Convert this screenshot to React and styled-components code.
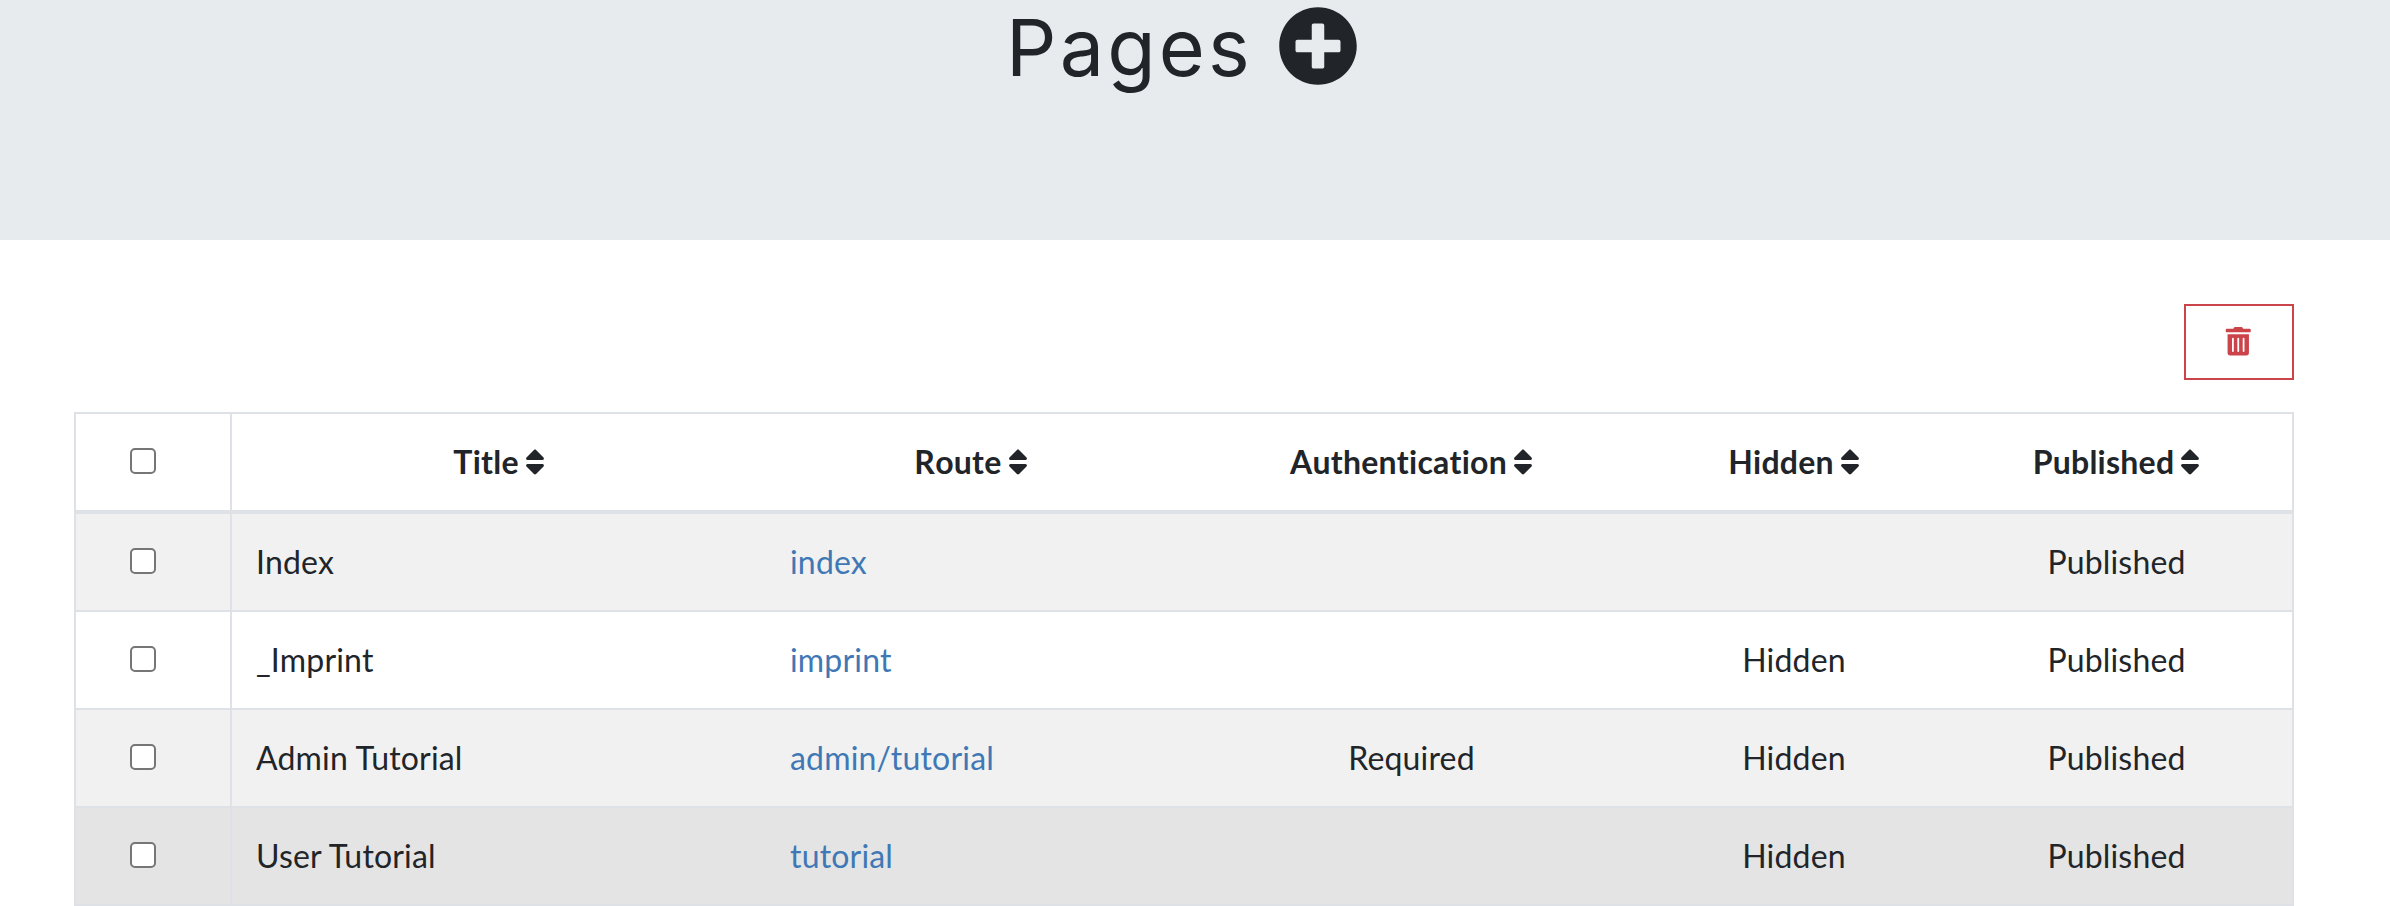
import React from "react";
import styled, { createGlobalStyle } from "styled-components";
import { FaPlusCircle, FaSort, FaTrashAlt } from "react-icons/fa";

const GlobalStyle = createGlobalStyle`
  * { box-sizing: border-box; }
  body {
    margin: 0;
    background: #fff;
    color: #212529;
    font: 400 32px/48px Lato, sans-serif;
    font-variant-ligatures: none;
    letter-spacing: 0.18px;
    overflow: hidden;
  }
`;

const Hero = styled.header`
  height: 240px;
  background: #e8ebee;
  display: flex;
  justify-content: center;
  align-items: flex-start;
  padding-right: 26px;
`;

const Heading = styled.h1`
  margin: 0;
  display: flex;
  justify-content: space-between;
  width: 352px;
  font: 400 79px/94px Inter, sans-serif;
  letter-spacing: 3.2px;

  svg { margin-top: 6px; font-size: 80px; }
`;

const Main = styled.main`
  padding: 64px 96px 0 74px;
`;

const Toolbar = styled.div`
  display: flex;
  justify-content: flex-end;
  margin-bottom: 32px;
`;

const DeleteButton = styled.button`
  width: 110px;
  height: 76px;
  padding: 0 2px 1px 0;
  display: flex;
  align-items: center;
  justify-content: center;
  border: 2px solid #cb444a;
  background: transparent;
  color: #cb444a;
  font-size: 28.5px;
`;

const Table = styled.div`
  border: 2px solid #dee2e6;
`;

const Row = styled.div`
  display: grid;
  grid-template-columns: 156px 534px 410px 471px 294px 351px;
  height: 98px;
  background: ${(p) => p.$bg || "#fff"};
  border-bottom: 2px solid #dee2e6;

  &:last-child { height: 96px; border-bottom: 0; }
`;

const HeadRow = styled(Row)`
  height: 100px;
  border-bottom-width: 4px;
  font-weight: 700;
  font-kerning: none;
  letter-spacing: 0.25px;
`;

const Cell = styled.div`
  display: flex;
  align-items: center;
  justify-content: ${(p) => (p.$left ? "flex-start" : "center")};
  gap: 6px;
  padding: 0 24px;
  white-space: nowrap;
`;

const SortIcon = styled(FaSort)`
  width: 20px;
  height: 32px;
`;

const SelectCell = styled.div`
  border-right: 2px solid #dee2e6;
  padding: 34px 0 0 54px;
`;

const Checkbox = styled.input.attrs({ type: "checkbox" })`
  appearance: none;
  display: block;
  width: 26px;
  height: 26px;
  margin: 0;
  border: 2px solid #767676;
  border-radius: 5px;
  background: #fff;
`;

const RouteLink = styled.a`
  color: #4078b5;
  text-decoration: none;
`;

const columns = ["Title", "Route", "Authentication", "Hidden", "Published"];

const pages = [
  { title: "Index", route: "index", auth: "", hidden: "", bg: "#f1f1f1" },
  { title: "_Imprint", route: "imprint", auth: "", hidden: "Hidden", bg: "#fff" },
  { title: "Admin Tutorial", route: "admin/tutorial", auth: "Required", hidden: "Hidden", bg: "#f1f1f1" },
  { title: "User Tutorial", route: "tutorial", auth: "", hidden: "Hidden", bg: "#e4e4e4" },
];

export default function App() {
  return (
    <>
      <GlobalStyle />
      <Hero>
        <Heading>
          Pages <FaPlusCircle />
        </Heading>
      </Hero>
      <Main>
        <Toolbar>
          <DeleteButton aria-label="Delete">
            <FaTrashAlt />
          </DeleteButton>
        </Toolbar>
        <Table>
          <HeadRow>
            <SelectCell><Checkbox /></SelectCell>
            {columns.map((name) => (
              <Cell key={name}>
                {name}
                <SortIcon />
              </Cell>
            ))}
          </HeadRow>
          {pages.map((page) => (
            <Row key={page.route} $bg={page.bg}>
              <SelectCell><Checkbox /></SelectCell>
              <Cell $left>{page.title}</Cell>
              <Cell $left><RouteLink href="#">{page.route}</RouteLink></Cell>
              <Cell>{page.auth}</Cell>
              <Cell>{page.hidden}</Cell>
              <Cell>Published</Cell>
            </Row>
          ))}
        </Table>
      </Main>
    </>
  );
}
